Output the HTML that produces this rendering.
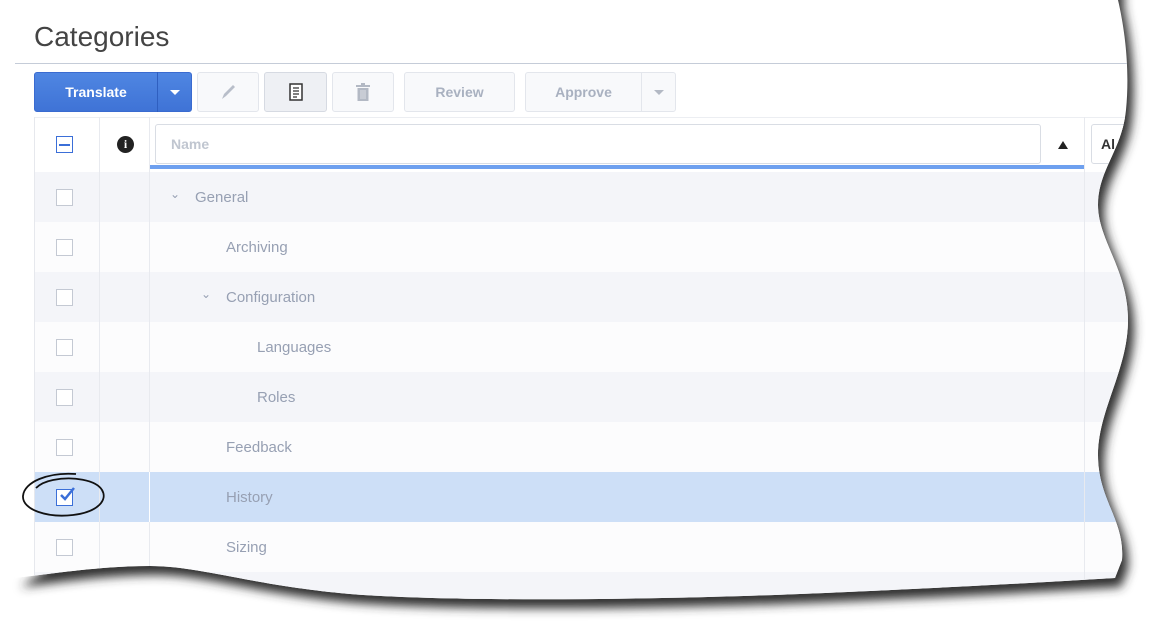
<!DOCTYPE html>
<html><head><style>
*{margin:0;padding:0;box-sizing:border-box}
body{width:1164px;height:633px;background:#fff;position:relative;overflow:hidden;font-family:"Liberation Sans",sans-serif}
#shadow{position:absolute;left:0;top:0}
#page{position:absolute;left:0;top:0;width:1164px;height:633px;background:#fff;clip-path:path("M15,0 L1118,0 C1125,30 1130,70 1126,110 C1122,150 1098,170 1098,205 C1098,240 1128,270 1128,320 C1128,370 1098,410 1098,455 C1098,500 1125,520 1122,560 L1115,578 C1000,585 900,590 800,594 C650,600 450,602 350,594 C250,585 200,566 150,566 C100,566 50,574 15,578 Z")}
.a{position:absolute}
.btn{position:absolute;top:72px;height:40px;border:1px solid #e3e6ec;border-radius:3px;background:#f8f9fb;color:#a9b1c0;font-weight:bold;font-size:14px;display:flex;align-items:center;justify-content:center}
.row{position:absolute;left:34px;width:1130px;height:50px}
.cb{position:absolute;left:56px;width:17px;height:17px;border:1.5px solid #c4c9d3;background:#fff}
.t{position:absolute;font-size:15px;color:#97a0b3}
</style></head><body>
<svg id="shadow" width="1164" height="633"><defs><filter id="b" x="-10%" y="-10%" width="120%" height="120%"><feGaussianBlur stdDeviation="5"/></filter></defs>
<path transform="translate(6,9)" filter="url(#b)" fill="#333" d="M40,-20 L1118,-20 L1118,0 C1125,30 1130,70 1126,110 C1122,150 1098,170 1098,205 C1098,240 1128,270 1128,320 C1128,370 1098,410 1098,455 C1098,500 1125,520 1122,560 L1115,578 C1000,585 900,590 800,594 C650,600 450,602 350,594 C250,585 200,566 150,566 C100,566 50,574 15,578 L40,560 Z"/></svg>
<div id="page">
<div class="a" style="left:34px;top:21px;font-size:28px;color:#444">Categories</div>
<div class="a" style="left:14px;top:63px;width:1150px;height:1px;background:#c5ccd8"></div>
<div class="a" style="left:34px;top:72px;width:158px;height:40px;background:linear-gradient(#4f86e2,#3f73d6);border-radius:3px;border:1px solid #3a6bd0"></div>
<div class="a" style="left:34px;top:72px;width:124px;height:40px;color:#fff;font-weight:bold;font-size:14px;display:flex;align-items:center;justify-content:center">Translate</div>
<div class="a" style="left:157px;top:72px;width:1px;height:40px;background:#2f5fc0"></div>
<div class="a" style="left:170px;top:90px;border-left:5px solid transparent;border-right:5px solid transparent;border-top:5px solid #fff"></div>
<div class="btn" style="left:197px;width:62px"><svg width="20" height="20"><path d="M4,17 L6,12 L15,3 L17,5 L8,14 Z" fill="#b8bec9"/></svg></div>
<div class="btn" style="left:264px;width:63px;background:#eef0f4;border-color:#d6dae2"><svg width="14" height="18"><rect x="1" y="1" width="12" height="16" fill="#fff" stroke="#333" stroke-width="1.5"/><path d="M4,5h6M4,8h6M4,11h6M4,14h4" stroke="#333" stroke-width="1.2"/></svg></div>
<div class="btn" style="left:332px;width:62px"><svg width="14" height="18"><rect x="0" y="2" width="14" height="2" fill="#b3b9c4"/><rect x="5" y="0" width="4" height="2" fill="#b3b9c4"/><rect x="1.5" y="5" width="11" height="13" fill="#b3b9c4"/><path d="M5,7v9M7,7v9M9,7v9" stroke="#e8eaee" stroke-width="0.8"/></svg></div>
<div class="btn" style="left:404px;width:111px">Review</div>
<div class="btn" style="left:525px;width:151px"><span style="margin-right:34px">Approve</span></div>
<div class="a" style="left:641px;top:73px;width:1px;height:38px;background:#e3e6ec"></div>
<div class="a" style="left:654px;top:90px;border-left:5px solid transparent;border-right:5px solid transparent;border-top:5px solid #b3b9c4"></div>
<div class="a" style="left:34px;top:117px;width:1130px;height:55px;background:#fff;border-top:1px solid #eceef2"></div>
<div class="a" style="left:56px;top:136px;width:17px;height:17px;border:1.5px solid #3b6fd8"></div>
<div class="a" style="left:59px;top:143.5px;width:11px;height:2px;background:#3b6fd8"></div>
<div class="a" style="left:117px;top:136px;width:17px;height:17px;border-radius:50%;background:#222;color:#fff;font-size:12px;font-weight:bold;text-align:center;line-height:17px;font-family:'Liberation Serif',serif">i</div>
<div class="a" style="left:155px;top:124px;width:886px;height:40px;border:1px solid #d9dde4;border-radius:3px;background:#fff"></div>
<div class="a" style="left:171px;top:136px;font-size:14px;color:#c0c6d0;font-weight:bold">Name</div>
<div class="a" style="left:149px;top:165px;width:935px;height:4px;background:#6ea0ef"></div>
<div class="a" style="left:1058px;top:141px;border-left:5px solid transparent;border-right:5px solid transparent;border-bottom:8px solid #222"></div>
<div class="a" style="left:1091px;top:124px;width:60px;height:40px;border:1px solid #d9dde4;border-radius:3px;background:#fff"></div>
<div class="a" style="left:1101px;top:136px;font-size:14px;color:#333;font-weight:bold">Al</div>

<div class="row" style="top:172px;background:#f4f5f9"></div>
<div class="row" style="top:222px;background:#fcfcfd"></div>
<div class="row" style="top:272px;background:#f4f5f9"></div>
<div class="row" style="top:322px;background:#fcfcfd"></div>
<div class="row" style="top:372px;background:#f4f5f9"></div>
<div class="row" style="top:422px;background:#fcfcfd"></div>
<div class="row" style="top:472px;background:#cddff7"></div>
<div class="row" style="top:522px;background:#fcfcfd"></div>
<div class="row" style="top:572px;background:#f4f5f9"></div>
<div class="a" style="left:34px;top:117px;width:1px;height:480px;background:#e6e8ed"></div>
<div class="a" style="left:99px;top:117px;width:1px;height:480px;background:#e8eaef"></div>
<div class="a" style="left:149px;top:117px;width:1px;height:480px;background:#e8eaef"></div>
<div class="a" style="left:1084px;top:117px;width:1px;height:480px;background:#e8eaef"></div>
<div class="a" style="left:149px;top:472px;width:1px;height:50px;background:#fff"></div>

<div class="cb" style="top:189px"></div>
<div class="cb" style="top:239px"></div>
<div class="cb" style="top:289px"></div>
<div class="cb" style="top:339px"></div>
<div class="cb" style="top:389px"></div>
<div class="cb" style="top:439px"></div>
<div class="cb" style="top:489px;border-color:#3b6fd8;background:#fff"></div>
<svg class="a" style="left:57px;top:484px" width="20" height="20"><path d="M4,11 L8,15 L17,4" fill="none" stroke="#3b6fd8" stroke-width="2.5"/></svg>
<div class="cb" style="top:539px"></div>

<div class="t" style="left:170px;top:187px;font-size:12px">⌄</div>
<div class="t" style="left:195px;top:189px">General</div>
<div class="t" style="left:226px;top:239px">Archiving</div>
<div class="t" style="left:201px;top:287px;font-size:12px">⌄</div>
<div class="t" style="left:226px;top:289px">Configuration</div>
<div class="t" style="left:257px;top:339px">Languages</div>
<div class="t" style="left:257px;top:389px">Roles</div>
<div class="t" style="left:226px;top:439px">Feedback</div>
<div class="t" style="left:226px;top:489px">History</div>
<div class="t" style="left:226px;top:539px">Sizing</div>

<svg class="a" style="left:18px;top:470px" width="92" height="52"><path d="M58,4 C30,2 6,12 5,26 C4,40 30,48 55,45 C80,42 90,30 84,20 C78,10 55,6 35,10 C25,12 20,16 18,18" fill="none" stroke="#111" stroke-width="1.8"/></svg>
</div>
</body></html>
